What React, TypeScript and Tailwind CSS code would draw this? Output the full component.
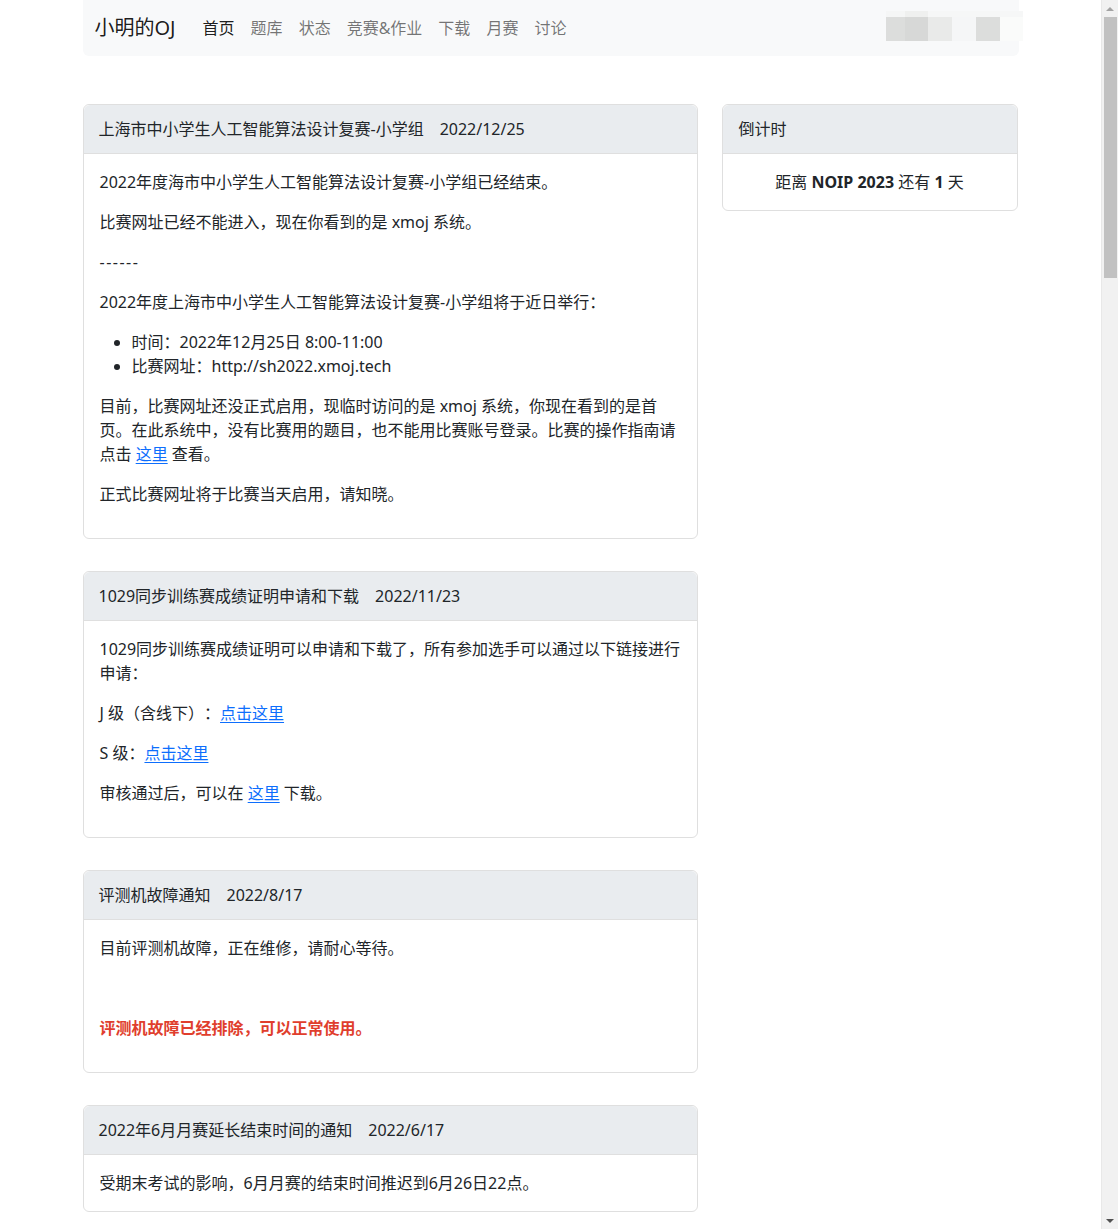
import React from 'react';

const font = { fontFamily: '"Noto Sans", "Noto Sans CJK SC", sans-serif' };

const navLinks = ['首页', '题库', '状态', '竞赛&作业', '下载', '月赛', '讨论'];

const Link: React.FC<{ children: React.ReactNode }> = ({ children }) => (
  <a href="#" className="text-[#0d6efd] underline underline-offset-[3px]">
    {children}
  </a>
);

const NewsCard: React.FC<{ title: string; date: string; children: React.ReactNode }> = ({ title, date, children }) => (
  <div className="mb-8 rounded-md border border-[#dfdfdf] bg-white">
    <div className="rounded-t-md border-b border-[#dfdfdf] bg-[#e9ecef] py-3 pr-4 pl-[15px] leading-6">
      <span>{title}</span>
      <span className="ml-4">{date}</span>
    </div>
    <div className="px-4 pt-4 pb-4">{children}</div>
  </div>
);

const Navbar = () => (
  <nav className="flex h-14 items-center rounded-b-md bg-[#f8f9fa] px-3">
    <a href="#" className="mr-[19px] text-xl leading-6 text-black/90">小明的OJ</a>
    <ul className="flex">
      {navLinks.map((name, i) => (
        <li key={name}>
          <a href="#" className={`block px-2 py-2 leading-6 ${i === 0 ? 'text-black/90' : 'text-black/55'}`}>
            {name}
          </a>
        </li>
      ))}
    </ul>
    {/* user area (blurred avatar + name) */}
    <div className="-mr-4 ml-auto mt-[-4px] flex flex-col">
      <div className="flex h-[6px]">
        <div className="w-[19px] bg-[#f5f6f6]" />
        <div className="w-[23px] bg-[#eff0ef]" />
        <div className="w-[95px] bg-[#f6f7f7]" />
      </div>
      <div className="flex h-6">
        <div className="w-[19px] bg-[#dcdddc]" />
        <div className="w-[23px] bg-[#d7d8d7]" />
        <div className="w-[24px] bg-[#e9eae9]" />
        <div className="w-[24px] bg-[#f5f6f7]" />
        <div className="w-[24px] bg-[#dcdddc]" />
        <div className="w-[23px] bg-[#fafbfa]" />
      </div>
    </div>
  </nav>
);

const Scrollbar = () => (
  <div className="flex w-[17px] shrink-0 flex-col items-center border-l border-[#e8e8e8] bg-[#f1f1f1]">
    <div className="flex h-[17px] items-center justify-center">
      <div className="h-0 w-0 border-x-[4px] border-b-[4px] border-x-transparent border-b-[#a3a3a3]" />
    </div>
    <div className="h-[261px] w-[13px] bg-[#c1c1c1]" />
    <div className="flex-1" />
    <div className="flex h-[17px] items-center justify-center">
      <div className="h-0 w-0 border-x-[4px] border-t-[4px] border-x-transparent border-t-[#505050]" />
    </div>
  </div>
);

export default function App() {
  return (
    <div
      className="flex h-screen overflow-hidden bg-white text-base leading-6 text-[#212529] [text-spacing-trim:space-all]"
      style={font}
    >
      <div className="flex-1 overflow-hidden">
        <div className="mx-auto w-[960px] px-3">
          <Navbar />
          <div className="mt-12 flex gap-6">
            <main className="w-[615px] shrink-0">
              <NewsCard title="上海市中小学生人工智能算法设计复赛-小学组" date="2022/12/25">
                <p className="mb-4">2022年度海市中小学生人工智能算法设计复赛-小学组已经结束。</p>
                <p className="mb-4">比赛网址已经不能进入，现在你看到的是 xmoj 系统。</p>
                <p className="mb-4 tracking-[1.5px]">------</p>
                <p className="mb-4">2022年度上海市中小学生人工智能算法设计复赛-小学组将于近日举行：</p>
                <ul className="mb-4 list-disc pl-8">
                  <li>时间：2022年12月25日 8:00-11:00</li>
                  <li>比赛网址：http://sh2022.xmoj.tech</li>
                </ul>
                <p className="mb-4">
                  目前，比赛网址还没正式启用，现临时访问的是 xmoj 系统，你现在看到的是首页。在此系统中，没有比赛用的题目，也不能用比赛账号登录。比赛的操作指南请点击 <Link>这里</Link> 查看。
                </p>
                <p className="mb-4">正式比赛网址将于比赛当天启用，请知晓。</p>
              </NewsCard>

              <NewsCard title="1029同步训练赛成绩证明申请和下载" date="2022/11/23">
                <p className="mb-4">1029同步训练赛成绩证明可以申请和下载了，所有参加选手可以通过以下链接进行申请：</p>
                <p className="mb-4">J 级（含线下）：<Link>点击这里</Link></p>
                <p className="mb-4">S 级：<Link>点击这里</Link></p>
                <p className="mb-4">审核通过后，可以在 <Link>这里</Link> 下载。</p>
              </NewsCard>

              <NewsCard title="评测机故障通知" date="2022/8/17">
                <p className="mb-4">目前评测机故障，正在维修，请耐心等待。</p>
                <p className="mb-4">
                  <br />
                </p>
                <p className="mb-4 font-bold text-[#e03e2d]">评测机故障已经排除，可以正常使用。</p>
              </NewsCard>

              <NewsCard title="2022年6月月赛延长结束时间的通知" date="2022/6/17">
                <p>受期末考试的影响，6月月赛的结束时间推迟到6月26日22点。</p>
              </NewsCard>
            </main>

            <aside className="w-[296px] shrink-0">
              <div className="rounded-md border border-[#dfdfdf] bg-white">
                <div className="rounded-t-md border-b border-[#dfdfdf] bg-[#e9ecef] px-4 py-3 leading-6">倒计时</div>
                <div className="p-4 text-center">
                  距离 <b>NOIP 2023</b> 还有 <b>1</b> 天
                </div>
              </div>
            </aside>
          </div>
        </div>
      </div>
      <Scrollbar />
    </div>
  );
}
